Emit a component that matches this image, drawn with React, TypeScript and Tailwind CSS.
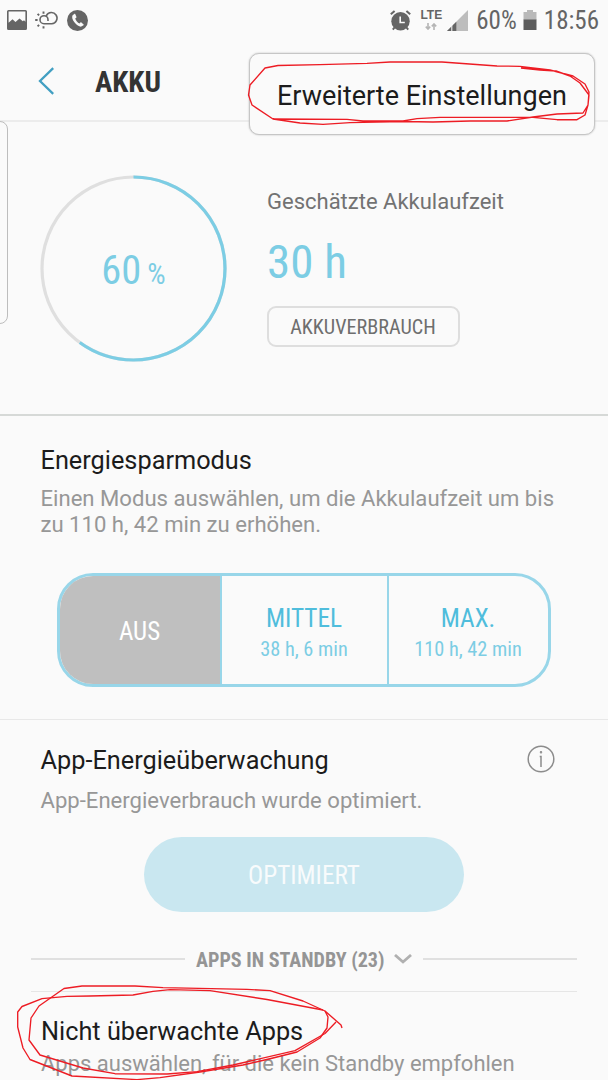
import type { ReactNode } from 'react';

const modes = [
  { label: 'MITTEL', time: '38 h, 6 min', className: 'w-[167px] border-r-[2px] border-[#98d6e9]' },
  { label: 'MAX.', time: '110 h, 42 min', className: 'flex-1' },
];

function Condensed({ children, className }: { children: ReactNode; className: string }) {
  return (
    <span className={`block whitespace-nowrap font-['Roboto_Condensed',Roboto,sans-serif] [font-stretch:75%] ${className}`}>
      {children}
    </span>
  );
}

function StatusBar() {
  return (
    <div className="flex h-10 shrink-0 items-center justify-between pl-[7px] pr-[9px] text-[#656565]">
      <div className="flex items-center gap-2">
        <svg width="20" height="20" viewBox="0 0 20 20">
          <path
            fill="currentColor"
            fillRule="evenodd"
            d="M1.5 0h17A1.5 1.5 0 0 1 20 1.5v17a1.5 1.5 0 0 1-1.5 1.5h-17A1.5 1.5 0 0 1 0 18.5v-17A1.5 1.5 0 0 1 1.5 0ZM1.6 1.6v11.2L5.5 9.3l3 2.7 4-3.5 3.3 2.8 1.2-1.1 1.4 1.5V1.6Z"
          />
        </svg>
        <svg width="24" height="20" viewBox="0 0 24 20" fill="none" stroke="currentColor" strokeWidth="1.6">
          <path d="M11.4 5.6A5.6 5.6 0 1 1 16.8 13.7H9A4 4 0 1 1 13 9.7V11" />
          <path strokeWidth="1.9" d="M8.5 1.5v2.200M2.6 3.9l1.500 1.500M.2 10h2.400M2.600 16.400l1.500-1.500M8.500 16.200v2.200" />
        </svg>
        <svg width="21" height="21" viewBox="0 0 21 21">
          <circle cx="10.5" cy="10.5" r="10.5" fill="currentColor" />
          <path
            fill="#fafafa"
            d="M7.300 3.900 5.600 5.300C4.600 7 5.300 9.700 7.600 12.600c2.300 2.900 4.900 4.300 6.700 4l2.200-1.300c.4-.3.3-.6.1-.9l-2.200-1.900c-.3-.3-.7-.2-1 .1l-.9 1c-1.900-.8-3.700-2.900-4.300-5l1-.8c.3-.2.4-.6.2-1L8.200 4.100c-.2-.4-.6-.4-.9-.2Z"
          />
        </svg>
      </div>

      <div className="flex items-center">
        <svg width="21" height="21" viewBox="0 0 21 21">
          <circle cx="10.5" cy="11.3" r="9.2" fill="currentColor" />
          <path fill="none" stroke="currentColor" strokeWidth="2" d="M.8 4.300 4.600.9M20.200 4.300 16.400.9M4.500 17.500l-1.700 2.200M16.500 17.500l1.700 2.200" />
          <path fill="none" stroke="#fafafa" strokeWidth="1.6" d="M10.200 6.500v6h4.600" />
        </svg>
        <div className="ml-2 flex w-6 flex-col items-center">
          <span className="font-['Liberation_Sans',sans-serif] text-[12px] font-bold leading-[11px]">LTE</span>
          <svg className="mt-[2px]" width="12" height="7" viewBox="0 0 12 7" fill="none" stroke="#b5b5b5" strokeWidth="1.6">
            <path d="M3 0v6M.8 3.600 3 6l2.200-2.400M9 7V1M6.800 3.400 9 1l2.200 2.400" />
          </svg>
        </div>
        <svg className="ml-1" width="21" height="21" viewBox="0 0 21 21">
          <path fill="#bdbdbd" d="M21 0v21H0Z" />
          <path fill="#656565" d="M9.300 11.700V21H0Z" />
          <path stroke="#fafafa" strokeWidth="1" d="M4.800 10v11" />
        </svg>
        <Condensed className="ml-2 pt-[2px] text-[25px] leading-10">60%</Condensed>
        <svg className="ml-[6px]" width="14" height="20" viewBox="0 0 14 20">
          <path fill="#b9b9b9" d="M4 0h6v2h3.500v8H.5V2H4Z" />
          <path fill="#5c5c5c" d="M.5 9.500h13V20H.5Z" />
        </svg>
        <Condensed className="ml-[7px] pt-[2px] text-[25px] leading-10">18:56</Condensed>
      </div>
    </div>
  );
}

function Header() {
  return (
    <header className="flex h-[82px] shrink-0 items-center border-b-2 border-[#ececec] pl-[37px] pt-[2px]">
      <svg width="18" height="28" viewBox="0 0 18 28" fill="none" stroke="#429fc2" strokeWidth="2.300">
        <path d="M16.200 1.200 3 14l13.200 12.800" />
      </svg>
      <Condensed className="ml-10 pt-[2px] text-[29px] font-bold leading-10 text-[#333]">AKKU</Condensed>
    </header>
  );
}

function BatteryStatus() {
  return (
    <section className="flex h-[294px] shrink-0 border-b-2 border-[#d6d9d7] pl-10">
      <div className="relative mt-[53px] flex h-[187px] w-[187px] items-center justify-center text-[#7ccde4]">
        <svg className="absolute inset-0" width="187" height="187" viewBox="0 0 187 187" fill="none" strokeWidth="3.200">
          <circle cx="93.500" cy="93.500" r="91.500" stroke="#dfdfdf" />
          <circle cx="93.500" cy="93.500" r="91.500" stroke="currentColor" pathLength="100" strokeDasharray="60 100" transform="rotate(-90 93.500 93.500)" />
        </svg>
        <div className="flex items-baseline gap-[6px] pt-1">
          <Condensed className="text-[40.500px] leading-none">60</Condensed>
          <Condensed className="text-[29px] leading-none">%</Condensed>
        </div>
      </div>
      <div className="ml-10 flex flex-col items-start pt-[64px]">
        <p className="text-[22px] leading-8 text-[#727272]">Geschätzte Akkulaufzeit</p>
        <Condensed className="mt-4 text-[47px] leading-[56px] text-[#7ccde4]">30 h</Condensed>
        <button className="mt-4 flex h-[41px] w-[193px] items-center justify-center rounded-[9px] border-2 border-[#dedede]">
          <Condensed className="pr-px pt-[2px] text-[20.200px] leading-none text-[#6e6e6e]">AKKUVERBRAUCH</Condensed>
        </button>
      </div>
    </section>
  );
}

function PowerSaving() {
  return (
    <section className="flex h-[304px] shrink-0 flex-col border-b border-[#e8e8e8] px-[40.500px] pt-[27px]">
      <h2 className="text-[25.300px] leading-9 text-[#1c1c1c]">Energiesparmodus</h2>
      <p className="mt-[6px] whitespace-nowrap text-[22.100px] leading-[26px] text-[#979797]">
        Einen Modus auswählen, um die Akkulaufzeit um bis
        <br />
        zu 110 h, 42 min zu erhöhen.
      </p>
      <div className="ml-[16.500px] mt-9 flex h-[114px] w-[494px] overflow-hidden rounded-[36px] border-[3px] border-[#98d6e9]">
        <div className="flex w-[162px] items-center justify-center border-r-2 border-[#98d6e9] bg-[#bfbfbf] text-white">
          <Condensed className="pr-px pt-1 text-[25px] leading-8">AUS</Condensed>
        </div>
        {modes.map((mode) => (
          <div key={mode.label} className={`flex flex-col items-center justify-center pr-px ${mode.className}`}>
            <Condensed className="mt-[5px] text-[25.300px] leading-8 text-[#4fbddc]">{mode.label}</Condensed>
            <Condensed className="text-[20.300px] leading-7 text-[#7ccde4]">{mode.time}</Condensed>
          </div>
        ))}
      </div>
    </section>
  );
}

function AppMonitoring() {
  return (
    <section className="shrink-0 px-[40.500px] pt-[23px]">
      <div className="flex items-center justify-between">
        <h2 className="text-[25.300px] leading-9 text-[#1c1c1c]">App-Energieüberwachung</h2>
        <svg className="mb-[5px] mr-[12.500px]" width="28" height="28" viewBox="0 0 28 28" fill="none" stroke="#8c8c8c" strokeWidth="1.5">
          <circle cx="14" cy="14" r="12.800" />
          <path d="M12.700 11.500H14V22" />
          <circle cx="14" cy="7.300" r=".5" />
        </svg>
      </div>
      <p className="mt-2 text-[22.100px] leading-[26px] text-[#979797]">App-Energieverbrauch wurde optimiert.</p>
      <button className="ml-[103.500px] mt-6 flex h-[75px] w-[320px] items-center justify-center rounded-full bg-[#c9e7f0]">
        <Condensed className="pt-[3px] text-[25.200px] leading-8 text-[#f8fbfc]">OPTIMIERT</Condensed>
      </button>
    </section>
  );
}

function StandbyApps() {
  return (
    <section className="flex shrink-0 flex-col pl-[31px] pr-[31px] pt-[31px]">
      <div className="flex h-8 items-center">
        <span className="h-[2px] w-[154px] bg-[#e0e0e0]" />
        <Condensed className="ml-[11px] pt-[2px] text-[20.100px] font-bold leading-8 text-[#959595]">APPS IN STANDBY (23)</Condensed>
        <svg className="ml-[10px]" width="18" height="10" viewBox="0 0 18 10" fill="none" stroke="#b0b0b0" strokeWidth="2.800">
          <path d="m1 1 8 7 8-7" />
        </svg>
        <span className="ml-[11px] h-[2px] flex-1 bg-[#e0e0e0]" />
      </div>
      <div className="mt-4 border-t border-[#e6e6e6] pl-[10px] pt-[22px]">
        <h2 className="text-[25.300px] leading-9 text-[#1c1c1c]">Nicht überwachte Apps</h2>
        <p className="whitespace-nowrap pt-px text-[22px] leading-[26px] text-[#979797]">Apps auswählen, für die kein Standby empfohlen</p>
      </div>
    </section>
  );
}

function PenMarks() {
  return (
    <svg
      className="pointer-events-none absolute inset-0"
      width="608"
      height="1080"
      viewBox="0 0 608 1080"
      fill="none"
      stroke="#ed1c24"
      strokeWidth="1.35"
      strokeLinejoin="round"
    >
      <path d="M521 68 540 70 556 71 570 76 580 83 589 95 588 105 583 113 557 114 533 117 507 121 470 121 433 122 403 121.500 350 122.700 323 124.300 300 123 273 119 252 105 248.500 95 250 85 265 68 278 65.500 320 64.700 367 63.300 390 62 442 62 497 66 520 66.300 550 70 573 76 585 84 589 92 588 105 585 115 577 119.700 557 119.700 533 117.300 440 117.300 417 118.700 403 121 363 121 347 119.300 273 119" />
      <path d="M342 1028 341 1025 325 1011 303 1001 270 990.700 247 989.300 163 987.700 135 986 82 986 64 988.500 39 1006 31 1018 29 1040 40 1055 83 1068 115 1073.700 167 1074 197 1071.700 233 1065 295 1050.700 325 1033.500 336 1022" />
      <path d="M325 1011 328 1017 327 1028 320 1038 297 1052 273 1058 243 1065 200 1072 160 1077.700 137 1079.600 72 1076 30 1059.500 23 1048 17.700 1027 17.700 1012 22 1006.500 42 998.700 67 996.300 90 996 133 995 153 991.300 170 989.700 210 990.700 267 999.500 323 1010" />
    </svg>
  );
}

export default function App() {
  return (
    <main className="relative flex h-[1080px] w-[608px] flex-col overflow-hidden bg-[#fafafa] font-[Roboto,sans-serif]">
      <StatusBar />
      <Header />
      <BatteryStatus />
      <PowerSaving />
      <AppMonitoring />
      <StandbyApps />

      {/* Edge panel handle */}
      <div className="absolute -left-3 top-[121px] h-[203px] w-5 rounded-lg border border-[#bdbdbd]" />

      {/* Overflow menu */}
      <div className="absolute left-[249px] top-[53px] flex h-[82px] w-[346px] items-center rounded-[10px] border border-[#c6c6c6] bg-[#fafafa] pl-[27px] pt-[3px] shadow-[0_0_2px_#bbb]">
        <span className="whitespace-nowrap text-[27px] leading-10 text-[#1c1c1c]">Erweiterte Einstellungen</span>
      </div>

      <PenMarks />
    </main>
  );
}
